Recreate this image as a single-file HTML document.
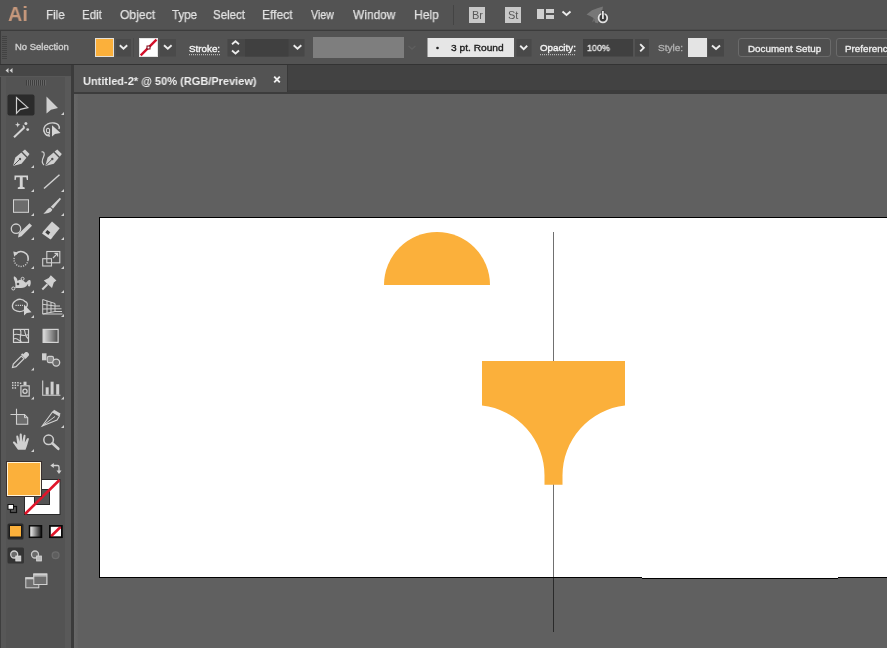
<!DOCTYPE html>
<html>
<head>
<meta charset="utf-8">
<title>Illustrator</title>
<style>
html,body{margin:0;padding:0;}
body{width:887px;height:648px;overflow:hidden;background:#606060;position:relative;font-family:"Liberation Sans",sans-serif;color:#d8d8d8;}
.abs{position:absolute;}
.t{position:absolute;white-space:nowrap;transform-origin:0 50%;line-height:1;will-change:transform;}
#menubar{left:0;top:0;width:887px;height:30px;background:#535353;}
#ctrlbar{left:0;top:31px;width:887px;height:33px;background:#535353;}
#sep1{left:0;top:29px;width:887px;height:2px;background:#3c3c3c;border-top:1px solid #4c4c4c;box-sizing:border-box;}
#sep2{left:0;top:64px;width:887px;height:1px;background:#333;}
#tabbar{left:74px;top:65px;width:813px;height:28px;background:#424242;}
#tab{left:74px;top:65px;width:213px;height:27px;background:#535353;border-right:1px solid #383838;}
#tabline{left:74px;top:90px;width:813px;height:4px;background:#3c3c3c;}
#tools{left:0;top:65px;width:72px;height:583px;background:#535353;}
#toolstrip{left:65px;top:77px;width:6px;height:571px;background:#595959;}
#toolsleft{left:0;top:77px;width:6px;height:571px;background:#575757;border-left:1px solid #3e3e3e;box-sizing:border-box;}
#canvasedge{left:74px;top:94px;width:4px;height:554px;background:linear-gradient(90deg,#676767,#626262);}
#toolsedge{left:71px;top:65px;width:3px;height:583px;background:#3b3b3b;}
#toolshead{left:0;top:65px;width:72px;height:11px;background:#464646;border-bottom:1px solid #585858;}
#canvas{left:74px;top:94px;width:813px;height:554px;background:#606060;}
#artboard{left:99px;top:217px;width:800px;height:359px;background:#fff;border:1px solid #000;}
.menu{font-size:13px;top:8px;color:#e2e2e2;-webkit-text-stroke:0.25px #e2e2e2;}
.ctl{font-size:9.6px;color:#e4e4e4;-webkit-text-stroke:0.35px currentColor;}
</style>
</head>
<body>
<div class="abs" id="menubar"></div>
<div class="abs" id="sep1"></div>
<div class="abs" id="ctrlbar"></div>
<div class="abs" id="sep2"></div>
<div class="abs" id="tabbar"></div>
<div class="abs" id="tabline"></div>
<div class="abs" id="tab"></div>
<div class="abs" id="canvas"></div>
<div class="abs" id="artboard"></div>
<div class="abs" id="tools"></div>
<div class="abs" id="toolstrip"></div>
<div class="abs" id="toolsleft"></div>
<div class="abs" id="canvasedge"></div>
<div class="abs" id="toolshead"></div>
<div class="abs" id="toolsedge"></div>

<!-- toolbar -->
<svg class="abs" id="toolsvg" style="left:0;top:65px" width="74" height="583" viewBox="0 65 74 583">
  <defs>
    <linearGradient id="gr1" x1="0" x2="1" y1="0" y2="0"><stop offset="0" stop-color="#e0e0e0"/><stop offset="1" stop-color="#4a4a4a"/></linearGradient>
    <linearGradient id="gr2" x1="0" x2="1" y1="0" y2="0"><stop offset="0" stop-color="#ffffff"/><stop offset="1" stop-color="#111"/></linearGradient>
    <path id="ct" d="M3 0 V3 H0 Z" fill="#d0d0d0"/>
  </defs>
  <!-- collapse arrows -->
  <path d="M8.500 68 L5.500 70.500 L8.500 73 Z M12.500 68 L9.500 70.500 L12.500 73 Z" fill="#d0d0d0"/>
  <!-- grip -->
  <g fill="#3e3e3e"><rect x="26" y="80" width="1" height="5.500"/><rect x="28" y="80" width="1" height="5.500"/><rect x="30" y="80" width="1" height="5.500"/><rect x="32" y="80" width="1" height="5.500"/><rect x="34" y="80" width="1" height="5.500"/><rect x="36" y="80" width="1" height="5.500"/><rect x="38" y="80" width="1" height="5.500"/><rect x="40" y="80" width="1" height="5.500"/><rect x="42" y="80" width="1" height="5.500"/><rect x="44" y="80" width="1" height="5.500"/></g>
  <g fill="#666"><rect x="27" y="80" width="1" height="5.500"/><rect x="29" y="80" width="1" height="5.500"/><rect x="31" y="80" width="1" height="5.500"/><rect x="33" y="80" width="1" height="5.500"/><rect x="35" y="80" width="1" height="5.500"/><rect x="37" y="80" width="1" height="5.500"/><rect x="39" y="80" width="1" height="5.500"/><rect x="41" y="80" width="1" height="5.500"/><rect x="43" y="80" width="1" height="5.500"/><rect x="45" y="80" width="1" height="5.500"/></g>

  <!-- row1: selection -->
  <rect x="7.500" y="94.500" width="27" height="21" rx="2" fill="#2b2b2b"/>
  <path d="M16.500 97.500 V113.300 L20.300 109.300 L27.800 107.600 Z" fill="#222" stroke="#cfcfcf" stroke-width="1.200" stroke-linejoin="miter"/>
  <path d="M46.500 96.500 V113.500 L51 109.800 L58 108 Z" fill="#cfcfcf"/>
  <use href="#ct" x="61" y="112"/>
  <!-- row2: wand, lasso -->
  <path d="M14 137.300 L24.500 127.300" stroke="#d4d4d4" stroke-width="2" fill="none"/>
  <path d="M17.700 122 L18.400 124 L20.400 124.700 L18.400 125.400 L17.700 127.400 L17 125.400 L15 124.700 L17 124 Z" fill="#d4d4d4"/>
  <circle cx="25.900" cy="123.400" r="1.500" fill="#d4d4d4"/><circle cx="27.700" cy="129.600" r="1.400" fill="#d4d4d4"/>
  <path d="M24.500 127.300 L22.800 125.500" stroke="#d4d4d4" stroke-width="1.200"/>
  <path d="M50 136 C45 136 43 131 44 128 C45 124 50 122.500 54 123 C58 123.500 60 126 59 129" fill="none" stroke="#d0d0d0" stroke-width="1.400"/>
  <path d="M49.500 130.500 a1.600 1.600 0 1 0 -3 0 a1.600 1.600 0 1 0 3 0 v2.500 c0 1.500 -1.500 2.500 -3 2" fill="none" stroke="#d0d0d0" stroke-width="1.100"/>
  <path d="M52 125.200 V136.600 L55 134 L60.600 133 Z" fill="#d4d4d4"/>

  <!-- row3: pen, curvature -->
  <g id="pen">
    <path d="M13 166 L15.300 157.500 L21.300 152.600 L26.500 157.800 L21.500 163.700 Z" fill="#d0d0d0"/>
    <path d="M22.300 151.600 L25 149.500 L29.500 154 L27.500 156.800 Z" fill="#d0d0d0"/>
    <path d="M13.500 165.500 L19.500 159.500" stroke="#535353" stroke-width="1"/>
    <circle cx="20" cy="159" r="1.200" fill="#535353"/>
  </g>
  <use href="#ct" x="31" y="165"/>
  <use href="#pen" x="32.300" y="0"/>
  <path d="M41.500 152 C44 151 45 154 43.500 157 C42 160 41.500 163 44 165" fill="none" stroke="#d0d0d0" stroke-width="1.200"/>

  <!-- row4: type, line -->
  <path d="M14.500 175.500 H28 V180 H26.800 L26.300 177.300 H22.700 V186.800 L24.700 187.600 V189 H17.800 V187.600 L19.800 186.800 V177.300 H16.200 L15.700 180 H14.500 Z" fill="#d4d4d4"/>
  <use href="#ct" x="31" y="189"/>
  <path d="M44 188.500 L59.500 174.800" stroke="#d0d0d0" stroke-width="1.500"/>
  <use href="#ct" x="61" y="189"/>

  <!-- row5: rect, brush -->
  <rect x="13.500" y="199.800" width="15" height="12.500" fill="#6c6c6c" stroke="#d4d4d4" stroke-width="1"/>
  <use href="#ct" x="31" y="213"/>
  <path d="M59.800 197.800 L61 199 L53 208.800 L50.800 206.800 Z" fill="#d0d0d0"/>
  <path d="M50.300 207.600 L52.300 209.600 C51.500 212.500 47 214 43.200 213.600 C46 212.500 46.500 209 50.300 207.600 Z" fill="#d0d0d0"/>
  <use href="#ct" x="61" y="213"/>

  <!-- row6: shaper, eraser -->
  <circle cx="16" cy="228.700" r="4.700" fill="none" stroke="#d0d0d0" stroke-width="1.300"/>
  <path d="M18 237.500 L18.800 233.600 L29.500 223.200 L32 225.700 L21.500 236.300 Z" fill="#d0d0d0"/>
  <use href="#ct" x="31" y="237"/>
  <path d="M52 221.400 L59.700 228.300 L51.200 238.700 L42.500 232.200 Z" fill="#d0d0d0"/>
  <path d="M44.500 231 L52.500 237 L50.500 239.500 L42 233.500 Z" fill="#d8d8d8"/>
  <path d="M45.300 232.600 L47.300 230 L50.300 232.300 L48.300 234.900 Z" fill="#3c3c3c"/>
  <use href="#ct" x="61" y="237"/>

  <!-- row7: rotate, scale -->
  <path d="M15.500 254.500 A7 7 0 0 1 28 260" fill="none" stroke="#d0d0d0" stroke-width="1.600"/>
  <path d="M28 260 A7 7 0 1 1 14.300 257.500" fill="none" stroke="#c4c4c4" stroke-width="1.400" stroke-dasharray="1.200 1.200"/>
  <path d="M13.300 251.500 L18 252.500 L14.300 256.800 Z" fill="#d0d0d0"/>
  <use href="#ct" x="31" y="266"/>
  <rect x="46.800" y="251.500" width="13" height="11.300" fill="none" stroke="#d0d0d0" stroke-width="1.100"/>
  <rect x="42.700" y="258.700" width="8.800" height="7.300" fill="none" stroke="#d0d0d0" stroke-width="1.100"/>
  <path d="M53 258 L57.300 253.600 M54.500 253.400 H57.600 V256.500" fill="none" stroke="#d0d0d0" stroke-width="1.200"/>
  <use href="#ct" x="61" y="266"/>

  <!-- row8: width, puppet -->
  <path d="M14 276.300 C16 277 17.500 279 17.600 281 C19 279.500 21.500 279.200 23.200 280.500 C24.800 281.800 25.500 283.200 26.800 282 C27.800 281 28.500 279.800 30.300 280.200 C31.200 282 30.800 285 29.600 286.600 L27.800 286 C28.400 284.500 28.200 283.800 27.400 284.800 C26 287 24 288 21 288 L15.200 288 C15.800 285 15.200 282 14.300 280 C13.800 279 13.500 277.500 14 276.300 Z" fill="#d0d0d0"/>
  <circle cx="13.300" cy="288.500" r="1.500" fill="#535353" stroke="#d8d8d8" stroke-width="1"/>
  <circle cx="18" cy="284" r="1.300" fill="#535353"/>
  <circle cx="22.600" cy="278.800" r="1.500" fill="#535353" stroke="#d0d0d0" stroke-width="1"/>
  <use href="#ct" x="31" y="290"/>
  <path d="M50.800 275.200 L56.400 280.600 L53.800 282.600 L52 288 L43.800 280.400 L48.800 278 Z" fill="#d0d0d0"/>
  <path d="M47.500 284.300 L42.300 289.500" stroke="#d0d0d0" stroke-width="2"/>
  <use href="#ct" x="61" y="290"/>

  <!-- row9: shape builder, perspective -->
  <path d="M16 300.500 C19 298.500 23 299 25 301.500 C27.500 302 28 305 26.500 307 L24 310.500 C21 312 17 311.500 14.500 310 C11.500 308 11.500 303 16 300.500 Z" fill="none" stroke="#d0d0d0" stroke-width="1.300"/>
  <path d="M15.500 305.300 H23" stroke="#d8d8d8" stroke-width="1.200" stroke-dasharray="1.200 1"/>
  <path d="M24 304.500 V315.500 L26.800 313 L31.500 312.300 Z" fill="#d4d4d4"/>
  <use href="#ct" x="31" y="315"/>
  <path d="M42.700 299.500 V314 H62.500 M42.700 299.500 L55 303.500 V311.500 L42.700 314 M47 300.900 V313.100 M51 302.200 V312.300 M42.700 304.300 L55 306 M42.700 309 L55 308.800 M55 306 H60 M55 308.800 H61.500 M55 311.500 H62" fill="none" stroke="#d0d0d0" stroke-width="1"/>
  <use href="#ct" x="61" y="314"/>

  <!-- row10: mesh, gradient -->
  <rect x="13.500" y="329.400" width="15" height="13" fill="none" stroke="#d4d4d4" stroke-width="1.200"/>
  <path d="M13.500 335 C18 332 23 338 28.500 334.500 M20 329.400 C23 333 18 338 21.500 342.400 M13.500 339 C17 337 19 341 21.500 342.400 M24 329.400 C26 332 24 336 28.500 339" fill="none" stroke="#d0d0d0" stroke-width="1.100"/>
  <rect x="43.100" y="329.400" width="15" height="13" fill="url(#gr1)" stroke="#d4d4d4" stroke-width="1.200"/>

  <!-- row11: eyedropper, blend -->
  <path d="M12.500 367.500 L13.300 364 L21.300 356 L24 358.700 L16 366.700 Z" fill="none" stroke="#d0d0d0" stroke-width="1.200"/>
  <path d="M21 354.500 L25.500 359 L26.800 357.700 L28.800 355.500 C30 354 27 351 25.300 352.300 L23.200 354.200 L22.300 353.300 Z" fill="#d0d0d0"/>
  <use href="#ct" x="31" y="367.500"/>
  <rect x="42" y="353.300" width="4.500" height="7" fill="#cfcfcf"/>
  <rect x="47.300" y="356.400" width="6.200" height="6.200" rx="1.500" fill="#8a8a8a" stroke="#cfcfcf" stroke-width="1.100"/>
  <circle cx="56.200" cy="362.600" r="3.500" fill="#6a6a6a" stroke="#d0d0d0" stroke-width="1.300"/>

  <!-- row12: symbol sprayer, graph -->
  <rect x="20.900" y="385.800" width="8.300" height="10.300" fill="none" stroke="#d0d0d0" stroke-width="1.200"/>
  <circle cx="25" cy="391.200" r="2.100" fill="none" stroke="#d0d0d0" stroke-width="1.300"/>
  <rect x="23.500" y="381.700" width="3" height="3.300" fill="#d0d0d0"/>
  <g fill="#d0d0d0"><rect x="12" y="382" width="1.500" height="1.500"/><rect x="14.600" y="382" width="1.500" height="1.500"/><rect x="17.200" y="382" width="1.500" height="1.500"/><rect x="19.800" y="382.500" width="1.500" height="1.500"/><rect x="12" y="384.600" width="1.500" height="1.500"/><rect x="14.600" y="384.600" width="1.500" height="1.500"/><rect x="17.200" y="384.600" width="1.500" height="1.500"/><rect x="12" y="387.200" width="1.500" height="1.500"/><rect x="14.600" y="387.200" width="1.500" height="1.500"/></g>
  <use href="#ct" x="31" y="396.500"/>
  <path d="M42.700 380.500 V395.300 H60.500" fill="none" stroke="#d0d0d0" stroke-width="1.100"/>
  <rect x="45.700" y="387.300" width="3" height="7.400" fill="#d0d0d0"/><rect x="50.600" y="381.700" width="3" height="13" fill="#d0d0d0"/><rect x="56.200" y="384.200" width="3" height="10.500" fill="#d0d0d0"/>
  <use href="#ct" x="61" y="396.500"/>

  <!-- row13: artboard, slice -->
  <path d="M10.500 414.500 H16.500 M16.500 408.800 V414.500" stroke="#d0d0d0" stroke-width="1.100" fill="none"/>
  <path d="M16.500 414.500 H24.500 L27.700 417.700 V424.300 H16.500 Z" fill="#6c6c6c" stroke="#d0d0d0" stroke-width="1.100"/>
  <path d="M24.500 414.500 V417.700 H27.700" fill="none" stroke="#d0d0d0" stroke-width="1"/>
  <path d="M42.200 426 L52.500 412 L59.500 416 L57 420 Z" fill="none" stroke="#d0d0d0" stroke-width="1.100"/>
  <path d="M52.500 412 L54 409.800 L60.500 413.500 L59.500 416 Z" fill="#d0d0d0"/>
  <path d="M42.200 426 L55 416.500" stroke="#d0d0d0" stroke-width="1"/>
  <use href="#ct" x="61" y="425"/>

  <!-- row14: hand, zoom -->
  <path d="M18 449.800 C16 447 14.500 444.500 13 443 C12.500 441.800 14 441 15 442 L17.300 444.300 L16.300 436.800 C16.200 435.300 18 435.200 18.300 436.500 L19.500 441.800 L19.700 434.600 C19.700 433 21.700 433 21.800 434.600 L22.200 441.700 L23.600 435.600 C23.900 434.200 25.700 434.600 25.500 436 L24.800 442.500 L27 438.500 C27.700 437.300 29.300 438 28.800 439.400 C27.800 442.500 27 446.500 25.500 449.800 Z" fill="#d0d0d0"/>
  <use href="#ct" x="31" y="449"/>
  <circle cx="48.600" cy="439.800" r="4.800" fill="none" stroke="#d0d0d0" stroke-width="1.500"/>
  <path d="M52.300 443.300 L58.300 448.800" stroke="#d0d0d0" stroke-width="2.600" stroke-linecap="round"/>

  <!-- fill / stroke -->
  <rect x="24.500" y="479.500" width="35.500" height="35" fill="#fff" stroke="#2a2a2a" stroke-width="1"/>
  <rect x="34.500" y="489.500" width="15" height="15" fill="#555" stroke="#2a2a2a" stroke-width="1"/>
  <path d="M25 514 L59.500 480" stroke="#e0152a" stroke-width="2.600"/>
  <rect x="6.500" y="461.500" width="35" height="35" fill="#fbb03b" stroke="#3a3030" stroke-width="1"/>
  <rect x="7.500" y="462.500" width="33" height="33" fill="none" stroke="#fff3d8" stroke-width="1"/>
  <!-- swap -->
  <path d="M53 465.500 H57.500 C58.500 465.500 59 466 59 467 V471" fill="none" stroke="#d0d0d0" stroke-width="1.300"/>
  <path d="M50.300 465.500 L53.800 463 V468 Z" fill="#d0d0d0"/><path d="M59 474 L56.500 470.500 H61.500 Z" fill="#d0d0d0"/>
  <!-- default -->
  <rect x="10.500" y="506.500" width="6" height="6" fill="#535353" stroke="#111" stroke-width="1.200"/>
  <rect x="8" y="504.500" width="5.500" height="4.800" fill="#fff" stroke="#111" stroke-width="1"/>

  <!-- color mode buttons -->
  <rect x="7.500" y="523.500" width="16" height="16" rx="1.500" fill="#2b2b2b"/>
  <rect x="9.500" y="525.500" width="12" height="11.500" fill="#fbb03b" stroke="#1a1a1a" stroke-width="1"/>
  <rect x="29.500" y="525.800" width="12" height="11.500" fill="url(#gr2)" stroke="#0a0a0a" stroke-width="1.500"/>
  <rect x="49.800" y="525.800" width="12" height="11.500" fill="#fff" stroke="#0a0a0a" stroke-width="1.500"/>
  <path d="M50.800 536.500 L60.800 526.800" stroke="#e0152a" stroke-width="2.600"/>
  <rect x="49.800" y="525.800" width="12" height="11.500" fill="none" stroke="#0a0a0a" stroke-width="1.500"/>

  <!-- draw modes -->
  <rect x="7.500" y="547.500" width="16.500" height="16" rx="1.500" fill="#343434"/>
  <circle cx="14.200" cy="554.500" r="3.500" fill="#6a6a6a" stroke="#d0d0d0" stroke-width="1.300"/>
  <rect x="15.800" y="556" width="5" height="5" fill="#c8c8c8" stroke="#e0e0e0" stroke-width="0.800"/>
  <circle cx="35" cy="554.500" r="3.500" fill="#6a6a6a" stroke="#c8c8c8" stroke-width="1.300"/>
  <rect x="36.600" y="556" width="4.800" height="5" fill="#bbb" stroke="#d8d8d8" stroke-width="0.800"/>
  <circle cx="55.600" cy="555.200" r="3.400" fill="#5e5e5e" stroke="#6c6c6c" stroke-width="1.300"/>

  <!-- screen mode -->
  <rect x="33.800" y="574" width="13" height="10.500" fill="#6e6e6e" stroke="#d0d0d0" stroke-width="1"/>
  <rect x="33.300" y="573.500" width="14" height="2" fill="#d0d0d0"/>
  <rect x="25.800" y="577.800" width="13" height="10" fill="#6e6e6e" stroke="#d0d0d0" stroke-width="1"/>
  <rect x="25.300" y="577.300" width="14" height="2" fill="#d0d0d0"/>
  <rect x="33.800" y="576" width="13" height="8.500" fill="#6e6e6e" stroke="#d0d0d0" stroke-width="1"/>
</svg>

<!-- canvas artwork -->
<svg class="abs" style="left:0;top:0" width="887" height="648" viewBox="0 0 887 648">
  <rect x="553" y="232" width="1" height="400" fill="#000" fill-opacity="0.56"/>
  <path d="M384 285 A53 53 0 0 1 490 285 Z" fill="#fbb03b"/>
  <path d="M482 361 H625 V405.500 A70.500 70.500 0 0 0 562.500 476 V484.800 H544.500 V476 A70.500 70.500 0 0 0 482 405.500 Z" fill="#fbb03b"/>
  <rect x="642" y="577" width="196" height="1" fill="#fff"/>
  <rect x="642" y="578" width="196" height="1" fill="#000"/>
</svg>

<!-- menu bar -->
<div class="t" id="ai" style="left:7.500px;top:2.500px;font-size:21px;font-weight:bold;color:#c6987c;transform:scaleX(0.94);">Ai</div>
<div class="t menu" id="m1" style="left:45.9px;transform:scaleX(0.891);">File</div>
<div class="t menu" id="m2" style="left:81.5px;transform:scaleX(0.887);">Edit</div>
<div class="t menu" id="m3" style="left:119.8px;transform:scaleX(0.932);">Object</div>
<div class="t menu" id="m4" style="left:171.8px;transform:scaleX(0.886);">Type</div>
<div class="t menu" id="m5" style="left:212.9px;transform:scaleX(0.886);">Select</div>
<div class="t menu" id="m6" style="left:262.3px;transform:scaleX(0.924);">Effect</div>
<div class="t menu" id="m7" style="left:310.6px;transform:scaleX(0.821);">View</div>
<div class="t menu" id="m8" style="left:353.4px;transform:scaleX(0.918);">Window</div>
<div class="t menu" id="m9" style="left:413.8px;transform:scaleX(0.929);">Help</div>

<!-- control bar -->
<div class="t ctl" id="c1" style="left:15.0px;top:42.600px;font-size:9.3px;color:#d0d0d0;transform:scaleX(1.019);">No Selection</div>


<!-- control bar widgets -->
<svg class="abs" style="left:0;top:0" width="887" height="66" viewBox="0 0 887 66">
  <!-- menubar icons -->
  <rect x="453" y="5" width="1" height="20" fill="#444"/>
  <rect x="469" y="7" width="16" height="16" fill="#c8c8c8"/>
  <rect x="505" y="7" width="16" height="16" fill="#c8c8c8"/>
  <rect x="537" y="9" width="7" height="10" fill="#d0d0d0"/>
  <rect x="546" y="9" width="8" height="4" fill="#d0d0d0"/>
  <rect x="546" y="15" width="8" height="4" fill="#d0d0d0"/>
  <path d="M562.5 11.5 L566.5 15 L570.5 11.5" fill="none" stroke="#ececec" stroke-width="1.900"/>
  <!-- rocket -->
  <path d="M586.500 14.500 L592 10.300 L598 8 L603 6.500 L602 12 L599.500 17 L598 23.300 L595 22.500 L593.500 18 L590 16 Z" fill="#777"/>
  <path d="M592 22.500 L593.500 18 L595.500 20 Z" fill="#6a6a6a"/>
  <circle cx="602.900" cy="18" r="4.300" fill="#3a3a3a" stroke="#e2e2e2" stroke-width="1.800"/>
  <rect x="601.300" y="10.500" width="3.200" height="9" fill="#3a3a3a"/>
  <rect x="602" y="11" width="1.800" height="8" fill="#e2e2e2"/>
  <!-- grip -->
  <rect x="0" y="31" width="1" height="33" fill="#3c3c3c"/><g fill="#424242"><rect x="2" y="36" width="5" height="1"/><rect x="2" y="38" width="5" height="1"/><rect x="2" y="40" width="5" height="1"/><rect x="2" y="42" width="5" height="1"/><rect x="2" y="44" width="5" height="1"/><rect x="2" y="46" width="5" height="1"/><rect x="2" y="48" width="5" height="1"/><rect x="2" y="50" width="5" height="1"/><rect x="2" y="52" width="5" height="1"/><rect x="2" y="54" width="5" height="1"/><rect x="2" y="56" width="5" height="1"/><rect x="2" y="58" width="5" height="1"/></g>
  <!-- fill swatch -->
  <rect x="116" y="39" width="15" height="17.500" fill="#4a4a4a"/><rect x="160" y="39" width="16" height="17.500" fill="#4a4a4a"/>
  <rect x="95.500" y="38.500" width="18" height="18" fill="#fbb03b" stroke="#e4e0d8"/>
  <path d="M119.800 45.300 L123.500 48.800 L127.200 45.300" fill="none" stroke="#ececec" stroke-width="1.900"/>
  <!-- stroke swatch -->
  <rect x="139.500" y="38.500" width="18" height="18" fill="#fff" stroke="#e4e4e4"/>
  <path d="M140.700 55.300 L156.500 39.700" stroke="#d4102a" stroke-width="2.400"/>
  <rect x="147" y="46" width="3" height="3" fill="#fff" stroke="#7a0010" stroke-width="1"/>
  <path d="M164 45.300 L167.800 48.800 L171.600 45.300" fill="none" stroke="#ececec" stroke-width="1.900"/>
  <rect x="133" y="38" width="1" height="19" fill="#4b4b4b"/>
  <!-- stroke group -->
  <rect x="227.500" y="39" width="77" height="17.500" fill="#474747"/>
  <rect x="245" y="39" width="43.500" height="17.500" fill="#404040"/>
  <path d="M232 44.300 L235.500 41.300 L239 44.300" fill="none" stroke="#ececec" stroke-width="1.800"/>
  <path d="M232 50.500 L235.500 53.500 L239 50.500" fill="none" stroke="#ececec" stroke-width="1.800"/>
  <path d="M293.700 45.300 L297.500 48.800 L301.300 45.300" fill="none" stroke="#ececec" stroke-width="1.900"/>
  <!-- gray box -->
  <rect x="313" y="37" width="91" height="21" fill="#7e7e7e"/>
  <path d="M408.500 46 L412 49 L415.500 46" fill="none" stroke="#5e5e5e" stroke-width="1.4"/>
  <!-- brush box -->
  <rect x="427.500" y="38" width="86.500" height="19" fill="#e6e6e6"/>
  <circle cx="437.500" cy="48" r="1.300" fill="#222"/>
  <rect x="516.500" y="39" width="15" height="17.500" fill="#494949"/>
  <path d="M520.200 45.800 L523.700 49.200 L527.200 45.800" fill="none" stroke="#ececec" stroke-width="1.900"/>
  <!-- opacity -->
  <rect x="583" y="39" width="50" height="17.500" fill="#404040"/>
  <rect x="635" y="39" width="14" height="17.500" fill="#474747"/>
  <path d="M640.200 44.200 L643.800 47.800 L640.200 51.400" fill="none" stroke="#ececec" stroke-width="1.900"/>
  <!-- style -->
  <rect x="688" y="38" width="19" height="19" fill="#e4e4e4"/>
  <rect x="708" y="39" width="16" height="17.500" fill="#474747"/>
  <path d="M712 45.500 L716 49 L720 45.500" fill="none" stroke="#ececec" stroke-width="1.900"/>
  <!-- buttons -->
  <rect x="738.500" y="38.500" width="92" height="18" rx="2.500" fill="#4f4f4f" stroke="#6a6a6a"/>
  <rect x="836.500" y="38.500" width="92" height="18" rx="2.500" fill="#4f4f4f" stroke="#6a6a6a"/>
  <!-- dotted underlines -->
  <path d="M189 54.700 H220" stroke="#cfcfcf" stroke-width="1" stroke-dasharray="1 1"/>
  <path d="M540 54.700 H576" stroke="#cfcfcf" stroke-width="1" stroke-dasharray="1 1"/>
</svg>
<div class="t" id="br" style="left:471.500px;top:9.500px;font-size:11px;color:#585858;">Br</div>
<div class="t" id="st" style="left:508px;top:9.500px;font-size:11px;color:#585858;">St</div>
<div class="t ctl" id="c2" style="left:188.6px;top:43.700px;color:#f6f6f6;transform:scaleX(1.022);">Stroke:</div>
<div class="t ctl" id="c3" style="left:451.4px;top:43px;color:#1e1e1e;transform:scaleX(1.061);">3 pt. Round</div>
<div class="t ctl" id="c4" style="left:540.4px;top:43px;color:#f6f6f6;transform:scaleX(1.019);">Opacity:</div>
<div class="t ctl" id="c5" style="left:587.1px;top:43px;color:#e6e6e6;transform:scaleX(0.932);">100%</div>
<div class="t ctl" id="c6" style="left:657.6px;top:43px;color:#b0b0b0;transform:scaleX(1.044);">Style:</div>
<div class="t ctl" id="c7" style="left:747.6px;top:43.700px;color:#ececec;transform:scaleX(1.023);">Document Setup</div>
<div class="t ctl" id="c8" style="left:844.8px;top:43.700px;color:#ececec;transform:scaleX(1.023);">Preferences</div>

<!-- tab -->
<div class="t" id="tabtxt" style="left:83.0px;top:76px;font-size:11.5px;font-weight:bold;color:#efefef;transform:scaleX(0.958);">Untitled-2* @ 50% (RGB/Preview)</div>
<svg class="abs" style="left:270px;top:72px" width="16" height="16" viewBox="270 72 16 16"><path d="M274.200 76.700 L279.800 82.300 M279.800 76.700 L274.200 82.300" stroke="#f0f0f0" stroke-width="1.900"/></svg>
</body>
</html>
